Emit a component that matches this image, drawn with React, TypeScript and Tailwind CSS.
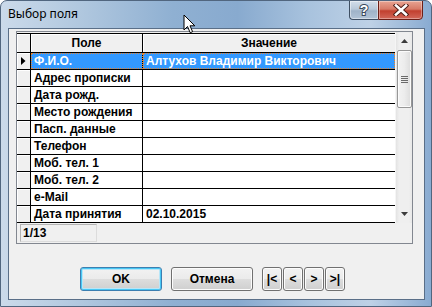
import React from "react";

const rows: [string, string][] = [
  ["Ф.И.О.", "Алтухов Владимир Викторович"],
  ["Адрес прописки", ""],
  ["Дата рожд.", ""],
  ["Место рождения", ""],
  ["Пасп. данные", ""],
  ["Телефон", ""],
  ["Моб. тел. 1", ""],
  ["Моб. тел. 2", ""],
  ["e-Mail", ""],
  ["Дата принятия", "02.10.2015"],
];

const gridFont = { fontFamily: '"Liberation Sans", Arial, sans-serif' };

function NavBtn({ label }: { label: string }) {
  return (
    <div className="w-[20px] h-[24px] flex items-center justify-center rounded-[3px] border border-[#707070] bg-[linear-gradient(180deg,#f2f2f2_0%,#ebebeb_50%,#dddddd_51%,#cfcfcf_100%)] text-[12px] font-bold text-black shadow-[inset_0_0_0_1px_#fcfcfc]">
      {label}
    </div>
  );
}

export default function App() {
  return (
    <div
      className="relative w-[432px] h-[307px] overflow-hidden rounded-t-[7px] border border-[#51667f] bg-[linear-gradient(90deg,#cbdaea_0%,#b1c8df_18%,#8fb0d2_40%,#88aacf_55%,#a9c3de_72%,#bed1e6_86%,#89abd1_100%)] flex flex-col"
      style={{ fontFamily: '"Noto Sans", "Liberation Sans", sans-serif' }}
    >
      {/* Title bar */}
      <div className="h-[27px] shrink-0 flex items-start relative">
        <div className="pl-[7px] pt-[4px] text-[12px] text-black leading-[18px]">Выбор поля</div>
        <div className="absolute right-[8px] top-[-1px] flex">
          <div className="w-[29px] h-[20px] rounded-bl-[4px] border border-[#3e4f63] border-r-0 bg-[linear-gradient(180deg,#d3deea_0%,#b9c9da_45%,#9fb3c8_55%,#b1c3d6_100%)] flex items-center justify-center shadow-[inset_0_0_0_1px_rgba(255,255,255,0.45)]">
            <svg width="14" height="16" viewBox="0 0 14 16">
              <text
                x="7"
                y="13"
                textAnchor="middle"
                fontSize="14"
                fontWeight="bold"
                fontFamily="Liberation Sans, Arial, sans-serif"
                fill="#ffffff"
                stroke="#3b4a5c"
                strokeWidth="2"
                paintOrder="stroke"
              >
                ?
              </text>
            </svg>
          </div>
          <div className="w-[45px] h-[20px] rounded-br-[4px] border border-[#6d1f17] bg-[linear-gradient(180deg,#e8a493_0%,#d77a66_45%,#c2402f_55%,#d2685a_100%)] flex items-center justify-center shadow-[inset_0_0_0_1px_rgba(255,255,255,0.35)]">
            <svg width="16" height="12" viewBox="0 0 16 12">
              <path d="M3 1.5 L13 10.5 M13 1.5 L3 10.5" stroke="#4a1a14" strokeWidth="4.5" strokeLinecap="square" />
              <path d="M3 1.5 L13 10.5 M13 1.5 L3 10.5" stroke="#ffffff" strokeWidth="2.6" strokeLinecap="square" />
            </svg>
          </div>
        </div>
      </div>

      {/* Client area */}
      <div className="ml-[7px] w-[417px] h-[272px] shrink-0 border border-[#5a6f88] bg-[#f0f0f0] flex flex-col" style={gridFont}>
        {/* Grid panel */}
        <div className="ml-[7px] mt-[2px] w-[397px] h-[213px] border border-[#828790] bg-[#f0f0f0] flex flex-col">
          <div className="flex">
            {/* grid body */}
            <div className="w-[378px] flex flex-col bg-white">
              {/* header */}
              <div className="flex h-[21px] border-b border-black border-t border-t-[#f0f0f0] bg-[#f0f0f0] text-[12px] font-bold">
                <div className="w-[14px] border-r border-black border-t border-t-black bg-[#f0f0f0] shadow-[inset_1px_1px_0_#ffffff]" />
                <div className="w-[112px] border-r border-black border-t border-t-black flex items-center justify-center shadow-[inset_1px_1px_0_#ffffff]">
                  Поле
                </div>
                <div className="flex-1 border-t border-t-black flex items-center justify-center shadow-[inset_1px_1px_0_#ffffff]">
                  Значение
                </div>
              </div>
              {rows.map(([f, v], i) => {
                const sel = i === 0;
                return (
                  <div key={i} className="flex h-[17px] border-b border-black text-[12px] font-bold">
                    <div className="w-[14px] border-r border-black bg-[#f0f0f0] shadow-[inset_1px_1px_0_#ffffff] flex items-center justify-center">
                      {sel && (
                        <svg width="5" height="8" viewBox="0 0 5 8">
                          <path d="M0 0 L4.5 4 L0 8 Z" fill="#000" />
                        </svg>
                      )}
                    </div>
                    <div
                      className={`w-[112px] border-r border-black pl-[3px] flex items-center whitespace-nowrap overflow-hidden ${
                        sel ? "bg-[#3399ff] text-white outline-1 outline-dotted outline-[#e8852f] -outline-offset-1" : "text-black"
                      }`}
                    >
                      {f}
                    </div>
                    <div
                      className={`flex-1 pl-[3px] flex items-center whitespace-nowrap overflow-hidden ${
                        sel ? "bg-[#3399ff] text-white outline-1 outline-dotted outline-[#e8852f] -outline-offset-1" : "text-black"
                      }`}
                    >
                      {v}
                    </div>
                  </div>
                );
              })}
            </div>
            {/* scrollbar */}
            <div className="w-[17px] bg-[linear-gradient(90deg,#e3e3e3_0%,#efefef_20%,#efefef_80%,#e8e8e8_100%)] border-l border-[#f5f5f5] flex flex-col items-center">
              <div className="h-[18px] w-full flex items-center justify-center">
                <svg width="7" height="4" viewBox="0 0 7 4">
                  <path d="M3.5 0 L7 4 L0 4 Z" fill="#3c3c3c" />
                </svg>
              </div>
              <div className="w-[15px] h-[58px] rounded-[2px] border border-[#979797] bg-[linear-gradient(90deg,#f3f3f3_0%,#ececec_50%,#dcdcdc_100%)] shadow-[inset_0_0_0_1px_#fbfbfb] flex flex-col items-center justify-center gap-[1px]">
                <div className="w-[7px] h-[1px] bg-[#6a6a6a]" />
                <div className="w-[7px] h-[1px] bg-[#6a6a6a]" />
                <div className="w-[7px] h-[1px] bg-[#6a6a6a]" />
                <div className="w-[7px] h-[1px] bg-[#6a6a6a]" />
              </div>
              <div className="flex-1" />
              <div className="h-[18px] w-full flex items-center justify-center">
                <svg width="7" height="4" viewBox="0 0 7 4">
                  <path d="M0 0 L7 0 L3.5 4 Z" fill="#3c3c3c" />
                </svg>
              </div>
            </div>
          </div>
          {/* status */}
          <div className="flex-1 flex items-start pl-[3px] pt-[1px]">
            <div className="w-[77px] h-[18px] border border-[#b4b4b4] border-b-[#dcdcdc] border-r-[#dcdcdc] flex items-center pl-[2px] text-[12px] font-bold text-black">
              1/13
            </div>
          </div>
        </div>

        {/* Buttons */}
        <div className="flex mt-[23px] ml-[71px] items-start">
          <div className="w-[82px] h-[24px] rounded-[3px] border border-[#3c7fb1] bg-[linear-gradient(180deg,#f2f2f2_0%,#ebebeb_50%,#dddddd_51%,#cfcfcf_100%)] shadow-[inset_0_0_0_1px_#48c7f4,inset_0_0_0_2px_#b8e6f8] flex items-center justify-center text-[12px] font-bold text-black">
            OK
          </div>
          <div className="ml-[9px] w-[82px] h-[24px] rounded-[3px] border border-[#707070] bg-[linear-gradient(180deg,#f2f2f2_0%,#ebebeb_50%,#dddddd_51%,#cfcfcf_100%)] shadow-[inset_0_0_0_1px_#fcfcfc] flex items-center justify-center text-[12px] font-bold text-black">
            Отмена
          </div>
          <div className="ml-[9px] flex gap-[1px]">
            <NavBtn label="|<" />
            <NavBtn label="<" />
            <NavBtn label=">" />
            <NavBtn label=">|" />
          </div>
        </div>
      </div>

      {/* cursor */}
      <svg className="absolute left-[182px] top-[13px]" width="14" height="21" viewBox="0 0 14 21">
        <path d="M1 1 L1 16 L4.5 12.5 L7.2 18.7 L9.6 17.7 L7 11.8 L11.8 11.8 Z" fill="#ffffff" stroke="#000000" strokeWidth="1" strokeLinejoin="miter" />
      </svg>
    </div>
  );
}
